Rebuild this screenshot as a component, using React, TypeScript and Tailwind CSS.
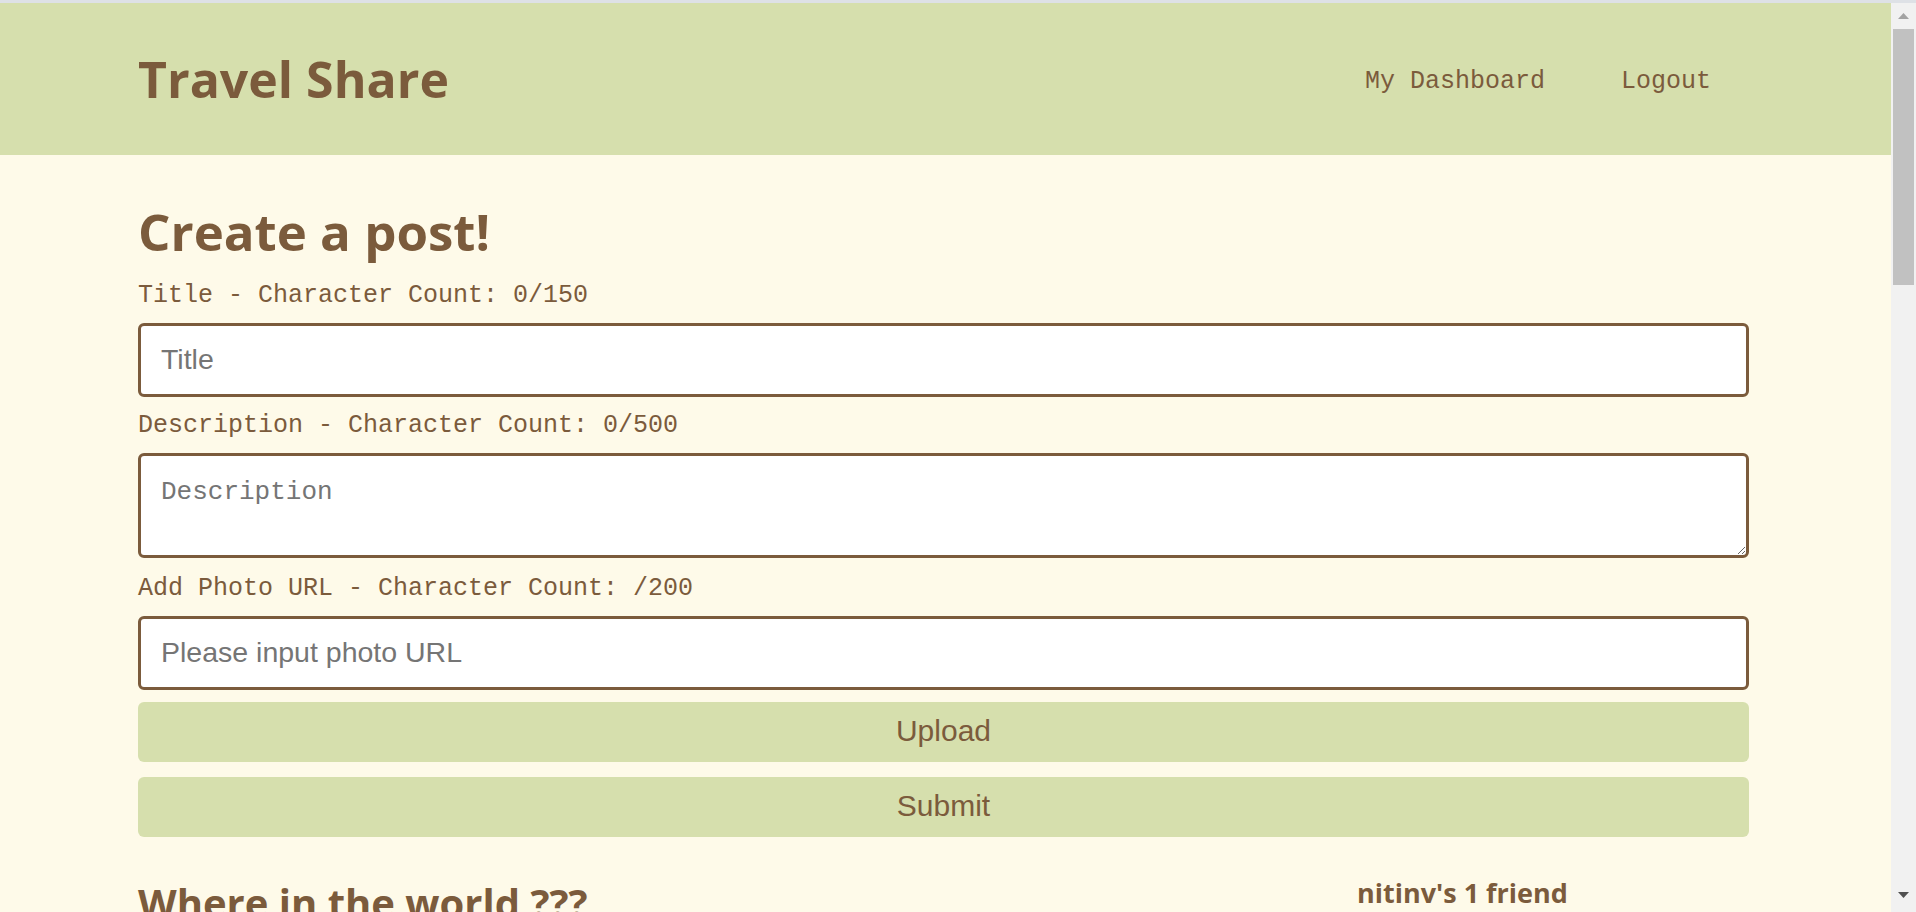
import { useState } from "react";

const brown = "text-[#7b5b3c]";

function Scrollbar() {
  return (
    <div className="flex w-[25px] flex-col bg-[#f1f1f1]">
      <div className="flex h-[26px] items-center justify-center">
        <svg width="11" height="6" viewBox="0 0 11 6">
          <polygon points="0,6 11,6 5.5,0" fill="#a3a3a3" />
        </svg>
      </div>
      <div className="mx-[2px] h-[256px] bg-[#c1c1c1]" />
      <div className="flex-1" />
      <div className="flex h-[20px] items-start justify-center">
        <svg width="11" height="6" viewBox="0 0 11 6">
          <polygon points="0,0 11,0 5.5,6" fill="#505050" />
        </svg>
      </div>
    </div>
  );
}

function Field({ label }: { label: string }) {
  return (
    <div className={`font-['Liberation_Mono',monospace] text-[25px] leading-[30px] ${brown}`}>
      {label}
    </div>
  );
}

export default function App() {
  const [title, setTitle] = useState("");
  const [description, setDescription] = useState("");
  const [photo, setPhoto] = useState("");

  return (
    <div className="flex h-[912px] w-[1916px] flex-col overflow-hidden">
      <div className="h-[3px] bg-[#dee1e6]" />
      <div className="flex min-h-0 flex-1">
        <div className="flex-1 overflow-hidden bg-[#fefae9]">
          <header className="flex h-[152px] items-center bg-[#d6dfad]">
            <div className="ml-[138px] flex w-[1611px] items-center justify-between">
              <div className={`font-['Open_Sans',sans-serif] text-[50px] font-bold leading-[60px] ${brown}`}>
                Travel Share
              </div>
              <nav className={`flex pt-[5px] font-['Liberation_Mono',monospace] text-[25px] ${brown}`}>
                <a className="px-[38px]">My Dashboard</a>
                <a className="px-[38px]">Logout</a>
              </nav>
            </div>
          </header>

          <main className="ml-[138px] w-[1611px]">
            <h1 className={`mt-[48px] font-['Open_Sans',sans-serif] text-[51px] font-bold leading-[56px] ${brown}`}>
              Create a post!
            </h1>
            <div className="mt-[22px]">
              <Field label={`Title - Character Count: ${title.length}/150`} />
            </div>
            <input
              value={title}
              onChange={(e) => setTitle(e.target.value)}
              placeholder="Title"
              className="mt-[12px] h-[74px] w-full rounded-[6px] border-[3px] border-[#7b5b3c] bg-white px-[20px] pb-[2px] font-['Liberation_Sans',Arial,sans-serif] text-[28.5px] text-[#333] outline-none placeholder:text-[#757575]"
            />
            <div className="mt-[14px]">
              <Field label={`Description - Character Count: ${description.length}/500`} />
            </div>
            <textarea
              value={description}
              onChange={(e) => setDescription(e.target.value)}
              placeholder="Description"
              className="mt-[12px] block h-[105px] w-full rounded-[6px] border-[3px] border-[#7b5b3c] bg-white px-[20px] pt-[20px] font-['Liberation_Mono',monospace] text-[26px] leading-[32px] text-[#333] outline-none placeholder:text-[#757575]"
            />
            <div className="mt-[16px]">
              <Field label={`Add Photo URL - Character Count: ${photo ? photo.length : ""}/200`} />
            </div>
            <input
              value={photo}
              onChange={(e) => setPhoto(e.target.value)}
              placeholder="Please input photo URL"
              className="mt-[12px] h-[74px] w-full rounded-[6px] border-[3px] border-[#7b5b3c] bg-white px-[20px] pb-[2px] font-['Liberation_Sans',Arial,sans-serif] text-[28.5px] text-[#333] outline-none placeholder:text-[#757575]"
            />
            <button
              className={`mt-[12px] block h-[60px] w-full rounded-[6px] bg-[#d6dfad] pb-[4px] font-['Liberation_Sans',Arial,sans-serif] text-[30px] ${brown}`}
            >
              Upload
            </button>
            <button
              className={`mt-[15px] block h-[60px] w-full rounded-[6px] bg-[#d6dfad] pb-[4px] font-['Liberation_Sans',Arial,sans-serif] text-[30px] ${brown}`}
            >
              Submit
            </button>

            <div className="mt-[42px] flex">
              <div className="flex-1">
                <h2 className={`font-['Open_Sans',sans-serif] text-[40px] font-bold leading-[48px] ${brown}`}>
                  Where in the world ???
                </h2>
              </div>
              <div className="w-[392px]">
                <h3 className={`font-['Open_Sans',sans-serif] text-[27px] font-bold leading-[28px] ${brown}`}>
                  nitinv's 1 friend
                </h3>
              </div>
            </div>
          </main>
        </div>
        <Scrollbar />
      </div>
    </div>
  );
}
